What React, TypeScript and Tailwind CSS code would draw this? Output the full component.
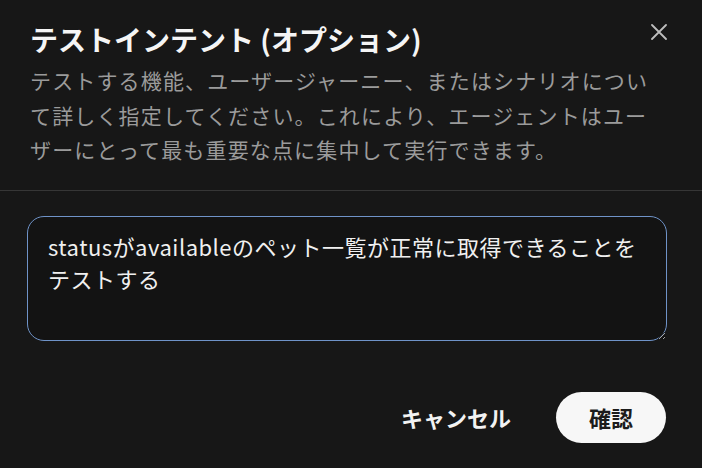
const IntentDialog = () => {
  return (
    <div
      className="w-[702px] h-[468px] bg-[#171717] text-white flex flex-col overflow-hidden"
      style={{ fontFamily: '"Noto Sans CJK JP", "Noto Sans", sans-serif' }}
    >
      {/* Header */}
      <div className="relative px-[30px] pt-[21px] pb-[23px] border-b border-[#363636]">
        <h2 className="text-[28px] leading-[36px] font-bold text-[#f5f5f5]">
          テストインテント (オプション)
        </h2>
        <p className="mt-[6px] w-[628px] text-[21px] leading-[34.5px] text-[#9b9b9b] tracking-[1.15px]">
          テストする機能、ユーザージャーニー、またはシナリオについて詳しく指定してください。これにより、エージェントはユーザーにとって最も重要な点に集中して実行できます。
        </p>
        <button className="absolute right-[35px] top-[24px] text-[#bdbdbd]">
          <svg width="16" height="16" viewBox="0 0 16 16" fill="none">
            <path
              d="M1 1L15 15M15 1L1 15"
              stroke="currentColor"
              strokeWidth="1.8"
              strokeLinecap="round"
            />
          </svg>
        </button>
      </div>

      {/* Body */}
      <div className="px-[27px] pt-[25px]">
        <textarea
          defaultValue="statusがavailableのペット一覧が正常に取得できることをテストする"
          className="block w-[640px] h-[125px] rounded-[17px] border-[1.5px] border-[#6f93c8] bg-[#131313] pl-[20px] pr-[14px] pt-[13px] text-[22px] leading-[32px] tracking-[0.5px] text-[#f0f0f0] outline-none [color-scheme:dark]"
          style={{ fontFamily: '"Noto Sans CJK JP", "Noto Sans", sans-serif' }}
        />
      </div>

      {/* Footer */}
      <div className="flex items-center justify-end gap-[45px] pr-[36px] pt-[51px]">
        <button className="text-[22px] font-bold text-[#f2f2f2]">キャンセル</button>
        <button className="w-[110px] h-[51px] rounded-full bg-[#f7f7f7] text-[22px] font-bold text-[#1c1c1c]">
          確認
        </button>
      </div>
    </div>
  );
};

export default function App() {
  return <IntentDialog />;
}
